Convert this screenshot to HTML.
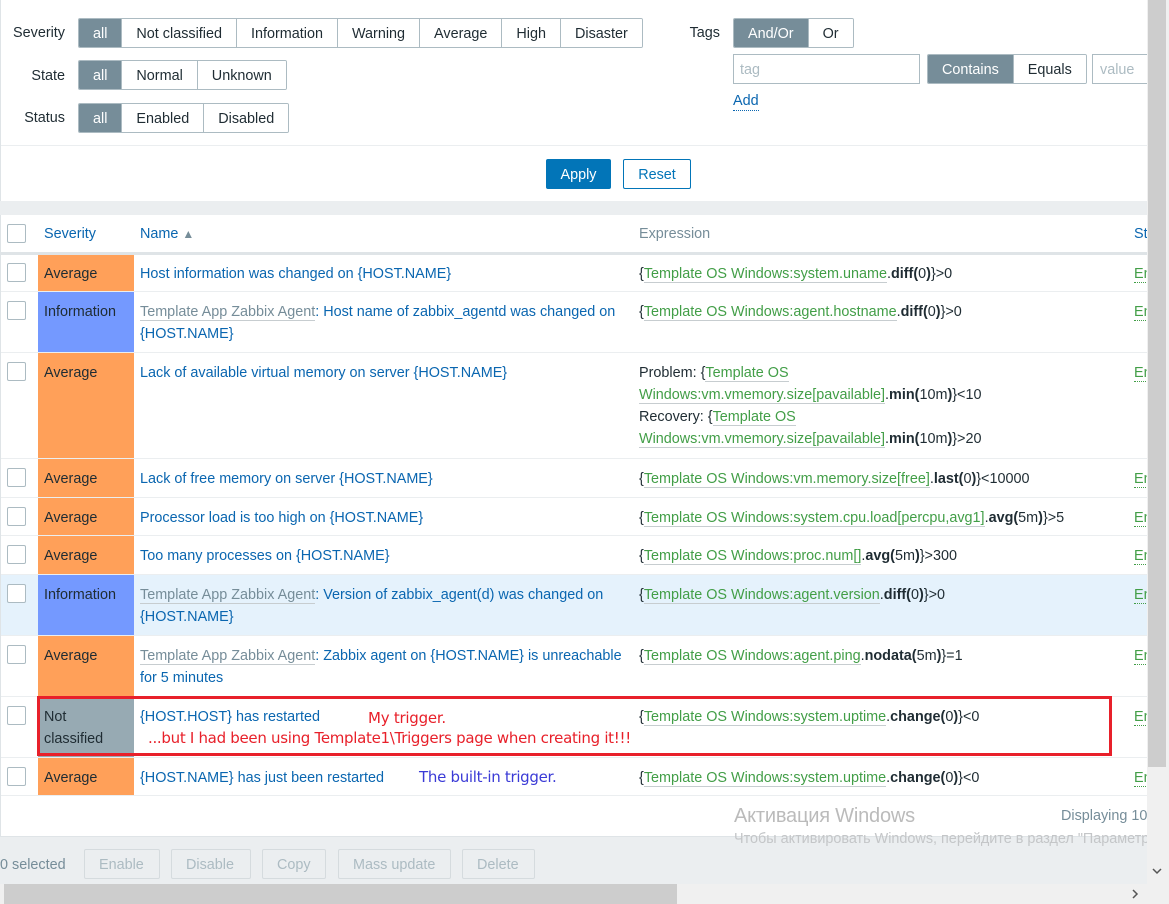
<!DOCTYPE html>
<html><head><meta charset="utf-8"><style>
*{box-sizing:border-box;margin:0;padding:0}
body{width:1169px;height:904px;overflow:hidden;background:#fff;font-family:"Liberation Sans",Arial,sans-serif;font-size:14.4px;color:#1f2c33;position:relative}
.a{position:absolute}
.lbl{position:absolute;text-align:right;color:#1f2c33}
.seg{position:absolute;display:flex;height:30px;border:1px solid #acbbc2;border-radius:2px;overflow:hidden}
.seg span{display:flex;align-items:center;padding:1px 14px 0;border-right:1px solid #acbbc2;color:#1f2c33;background:#fff}
.seg span:last-child{border-right:none}
.seg span.on{background:#768d99;color:#fff}
.row{position:absolute;left:1px;width:1146px;border-bottom:1px solid #ebeef0}
.cb{position:absolute;left:7px;width:19px;height:19px;border:1px solid #acbbc2;border-radius:2px;background:#fff}
.sev{position:absolute;left:37px;width:96px;top:0;bottom:0;padding:9px 6px;line-height:22px}
.nm{position:absolute;left:139px;width:490px;padding-top:9px;line-height:22px;color:#0a66b0}
.ex{position:absolute;left:638px;width:500px;padding-top:9px;line-height:22px;color:#1f2c33}
.st{position:absolute;left:1133px;padding-top:9px;line-height:22px;color:#429e47;border-bottom:none}
.st u{text-decoration:none;border-bottom:1px dotted #429e47}
.g{color:#429e47;border-bottom:1px solid #c7cdd0}
.tp{color:#768d99;border-bottom:1px solid #c7cdd0}
b{color:#1f2c33}
.avg{background:#ffa059;color:#1f2c33}
.inf{background:#7499ff;color:#1f2c33}
.nc{background:#97aab3;color:#1f2c33}
.btn{position:absolute;top:849px;height:30px;border:1px solid #d5dbde;border-radius:2px;color:#acbbc2;display:flex;align-items:center;padding:1px 14px 0;background:#ebeef0}
.ann{position:absolute;font-size:15px;font-family:'DejaVu Sans',sans-serif;white-space:nowrap}
</style></head><body>
<div class="a" style="left:0;top:0;width:1147px;height:201px;border-left:1px solid #dfe4e7;background:#fff"></div>
<div class="lbl" style="left:0;top:25px;width:65px">Severity</div>
<div class="seg" style="left:78px;top:18px"><span class="on" style="padding:1px 14px 0">all</span><span>Not classified</span><span>Information</span><span>Warning</span><span>Average</span><span>High</span><span>Disaster</span></div>
<div class="lbl" style="left:0;top:68px;width:65px">State</div>
<div class="seg" style="left:78px;top:60px"><span class="on">all</span><span>Normal</span><span>Unknown</span></div>
<div class="lbl" style="left:0;top:110px;width:65px">Status</div>
<div class="seg" style="left:78px;top:103px"><span class="on">all</span><span>Enabled</span><span>Disabled</span></div>
<div class="lbl" style="left:680px;top:25px;width:40px">Tags</div>
<div class="seg" style="left:733px;top:18px"><span class="on">And/Or</span><span>Or</span></div>
<div class="a" style="left:733px;top:54px;width:187px;height:30px;border:1px solid #acbbc2;color:#acbbc2;padding:7px 6px">tag</div>
<div class="seg" style="left:927px;top:54px"><span class="on">Contains</span><span>Equals</span></div>
<div class="a" style="left:1092px;top:54px;width:60px;height:30px;border:1px solid #acbbc2;color:#acbbc2;padding:7px 7px">value</div>
<div class="a" style="left:733px;top:93px;color:#0a66b0;border-bottom:1px dotted #0a66b0;line-height:17px">Add</div>
<div class="a" style="left:1px;top:145px;width:1146px;height:1px;background:#ebeef0"></div>
<div class="a" style="left:546px;top:159px;width:65px;height:30px;background:#0275b8;border:1px solid #0275b8;border-radius:2px;color:#fff;display:flex;align-items:center;justify-content:center;padding-top:1px">Apply</div>
<div class="a" style="left:623px;top:159px;width:68px;height:30px;background:#fff;border:1px solid #0275b8;border-radius:2px;color:#0275b8;display:flex;align-items:center;justify-content:center;padding-top:1px">Reset</div>
<div class="a" style="left:0;top:201px;width:1147px;height:14px;background:#ebeef0"></div>
<div class="a" style="left:0;top:215px;width:1147px;height:621px;border-left:1px solid #dfe4e7;background:#fff"></div>
<div class="row" style="top:215px;height:40px;border-bottom:3px solid #dfe4e7">
 <div class="cb" style="top:9px;left:6px"></div>
 <div class="a" style="left:43px;top:11px;color:#0a66b0">Severity</div>
 <div class="a" style="left:139px;top:11px;color:#0a66b0">Name <span style="font-size:12px;color:#768d99">&#9650;</span></div>
 <div class="a" style="left:638px;top:11px;color:#768d99">Expression</div>
 <div class="a" style="left:1133px;top:11px;color:#0a66b0">St</div>
</div>
<div class="row" style="top:255px;height:37px"><div class="cb" style="top:8px;left:6px"></div><div class="sev avg" style="padding-top:8px">Average</div><div class="nm" style="padding-top:8px">Host information was changed on {HOST.NAME}</div><div class="ex" style="padding-top:8px">{<span class="g">Template OS Windows:system.uname</span>.<b>diff(</b>0<b>)</b>}&gt;0</div><div class="st" style="padding-top:8px"><u>En</u></div></div>
<div class="row" style="top:292px;height:61px"><div class="cb" style="top:9px;left:6px"></div><div class="sev inf">Information</div><div class="nm"><span class="tp">Template App Zabbix Agent</span>: Host name of zabbix_agentd was changed on {HOST.NAME}</div><div class="ex">{<span class="g">Template OS Windows:agent.hostname</span>.<b>diff(</b>0<b>)</b>}&gt;0</div><div class="st"><u>En</u></div></div>
<div class="row" style="top:353px;height:106px"><div class="cb" style="top:9px;left:6px"></div><div class="sev avg">Average</div><div class="nm">Lack of available virtual memory on server {HOST.NAME}</div><div class="ex" style="width:370px">Problem: {<span class="g">Template OS Windows:vm.vmemory.size[pavailable]</span>.<b>min(</b>10m<b>)</b>}&lt;10<br>Recovery: {<span class="g">Template OS Windows:vm.vmemory.size[pavailable]</span>.<b>min(</b>10m<b>)</b>}&gt;20</div><div class="st"><u>En</u></div></div>
<div class="row" style="top:459px;height:39px"><div class="cb" style="top:9px;left:6px"></div><div class="sev avg">Average</div><div class="nm">Lack of free memory on server {HOST.NAME}</div><div class="ex">{<span class="g">Template OS Windows:vm.memory.size[free]</span>.<b>last(</b>0<b>)</b>}&lt;10000</div><div class="st"><u>En</u></div></div>
<div class="row" style="top:498px;height:38px"><div class="cb" style="top:9px;left:6px"></div><div class="sev avg">Average</div><div class="nm">Processor load is too high on {HOST.NAME}</div><div class="ex">{<span class="g">Template OS Windows:system.cpu.load[percpu,avg1]</span>.<b>avg(</b>5m<b>)</b>}&gt;5</div><div class="st"><u>En</u></div></div>
<div class="row" style="top:536px;height:39px"><div class="cb" style="top:9px;left:6px"></div><div class="sev avg">Average</div><div class="nm">Too many processes on {HOST.NAME}</div><div class="ex">{<span class="g">Template OS Windows:proc.num[]</span>.<b>avg(</b>5m<b>)</b>}&gt;300</div><div class="st"><u>En</u></div></div>
<div class="row" style="top:575px;height:61px;background:#e5f2fc"><div class="cb" style="top:9px;left:6px"></div><div class="sev inf">Information</div><div class="nm"><span class="tp">Template App Zabbix Agent</span>: Version of zabbix_agent(d) was changed on {HOST.NAME}</div><div class="ex">{<span class="g">Template OS Windows:agent.version</span>.<b>diff(</b>0<b>)</b>}&gt;0</div><div class="st"><u>En</u></div></div>
<div class="row" style="top:636px;height:61px"><div class="cb" style="top:9px;left:6px"></div><div class="sev avg">Average</div><div class="nm" style="width:485px"><span class="tp">Template App Zabbix Agent</span>: Zabbix agent on {HOST.NAME} is unreachable for 5 minutes</div><div class="ex">{<span class="g">Template OS Windows:agent.ping</span>.<b>nodata(</b>5m<b>)</b>}=1</div><div class="st"><u>En</u></div></div>
<div class="row" style="top:697px;height:61px"><div class="cb" style="top:9px;left:6px"></div><div class="sev nc">Not<br>classified</div><div class="nm">{HOST.HOST} has restarted</div><div class="ex">{<span class="g">Template OS Windows:system.uptime</span>.<b>change(</b>0<b>)</b>}&lt;0</div><div class="st"><u>En</u></div></div>
<div class="row" style="top:758px;height:38px"><div class="cb" style="top:9px;left:6px"></div><div class="sev avg">Average</div><div class="nm">{HOST.NAME} has just been restarted</div><div class="ex">{<span class="g">Template OS Windows:system.uptime</span>.<b>change(</b>0<b>)</b>}&lt;0</div><div class="st"><u>En</u></div></div>
<div class="a" style="left:37px;top:696px;width:1075px;height:60px;border:3px solid #e8202a"></div>
<div class="ann" style="left:368px;top:709px;color:#e8202a;letter-spacing:-0.25px">My trigger.</div>
<div class="ann" style="left:148px;top:729px;color:#e8202a;letter-spacing:-0.3px">...but I had been using Template1\Triggers page when creating it!!!</div>
<div class="ann" style="left:419px;top:768px;color:#3a3ad6;letter-spacing:-0.3px">The built-in trigger.</div>
<div class="a" style="left:1061px;top:808px;color:#768d99">Displaying 10</div>
<div class="a" style="left:734px;top:805px;color:#bbb;font-size:20px;letter-spacing:-0.2px">Активация Windows</div>
<div class="a" style="left:0;top:836px;width:1147px;height:48px;background:#ebeef0;border-top:1px solid #dfe4e7"></div>
<div class="a" style="left:0;top:857px;color:#768d99">0 selected</div>
<div class="btn" style="left:84px;width:76px">Enable</div>
<div class="btn" style="left:171px;width:80px">Disable</div>
<div class="btn" style="left:262px;width:64px">Copy</div>
<div class="btn" style="left:338px;width:113px">Mass update</div>
<div class="btn" style="left:462px;width:73px">Delete</div>
<div class="a" style="left:734px;top:831px;color:#c4c6c8;font-size:14.4px;white-space:nowrap">Чтобы активировать Windows, перейдите в раздел "Параметры".</div>
<div class="a" style="left:1147px;top:0;width:22px;height:884px;background:#f0f0f0"></div>
<div class="a" style="left:1148px;top:0;width:18px;height:767px;background:#cdcdcd"></div>
<svg class="a" style="left:1150px;top:866px" width="14" height="10"><path d="M3 3 L7 7 L11 3" stroke="#555" stroke-width="1.5" fill="none"/></svg>
<div class="a" style="left:0;top:884px;width:1169px;height:20px;background:#f0f0f0"></div>
<div class="a" style="left:4px;top:884px;width:673px;height:20px;background:#cdcdcd"></div>
<svg class="a" style="left:1130px;top:887px" width="10" height="14"><path d="M3 3 L7 7 L3 11" stroke="#555" stroke-width="1.5" fill="none"/></svg>
</body></html>
